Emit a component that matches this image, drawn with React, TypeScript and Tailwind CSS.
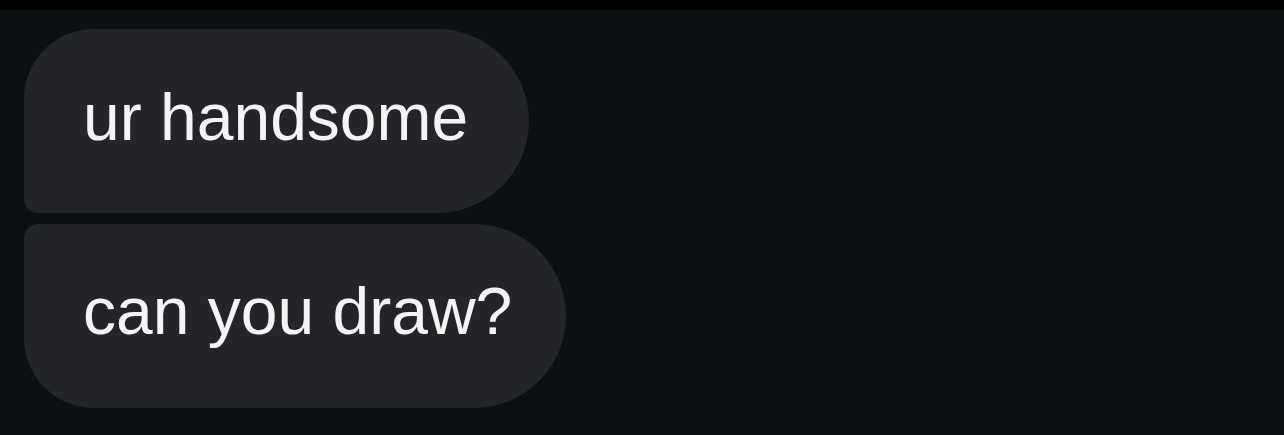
export default function App() {
  return (
    <div className="h-[435px] w-[1284px] overflow-hidden bg-[#0b1013] font-['Liberation_Sans',Arial,sans-serif]">
      <div className="h-[10px] bg-black" />
      <div className="flex flex-col items-start gap-[11px] pl-[24px] pt-[19px]">
        <div className="flex h-[184px] items-center rounded-r-[92px] rounded-tl-[70px] rounded-bl-[14px] bg-[#232528] pb-[8px] pl-[59px] pr-[61px]">
          <span className="text-[66px] leading-none text-[#f4f4f5]">ur handsome</span>
        </div>
        <div className="flex h-[184px] items-center rounded-r-[92px] rounded-tl-[14px] rounded-bl-[70px] bg-[#232528] pb-[11px] pl-[59px] pr-[54px]">
          <span className="text-[66px] leading-none text-[#f4f4f5]">can you draw?</span>
        </div>
      </div>
    </div>
  );
}
